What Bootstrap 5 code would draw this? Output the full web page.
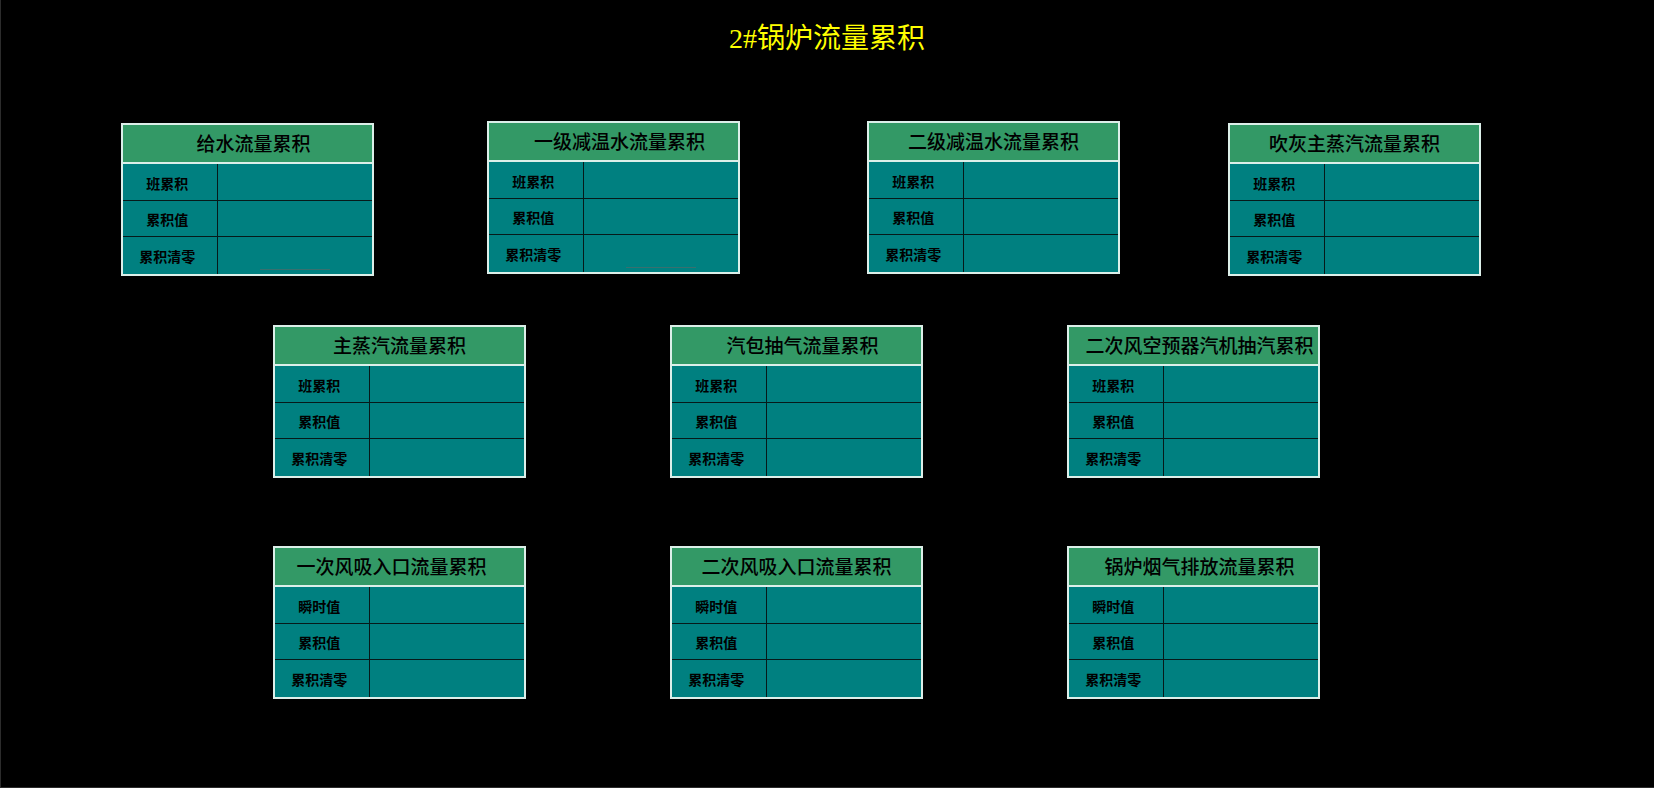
<!DOCTYPE html>
<html lang="zh-CN">
<head>
<meta charset="utf-8">
<meta name="viewport" content="width=device-width, initial-scale=1">
<title>2#锅炉流量累积</title>
<link href="https://cdn.jsdelivr.net/npm/bootstrap@5.3.0/dist/css/bootstrap.min.css" rel="stylesheet">
<style>
  body {
    background: #000;
    color: #000;
    font-family: "Noto Sans CJK SC", sans-serif;
    box-shadow: inset 1px -1px 0 #2c2c2c;
  }
  .page-title {
    color: #ff0;
    font-family: "Liberation Serif", "Noto Sans CJK SC", serif;
    font-size: 28px;
    line-height: 36px;
    padding-top: 21px;
    margin-bottom: 64px;
  }
  /* Meter rows: flexible tracks, panels sit on the even ones */
  .meters { display: grid; align-items: start; }
  .meters-four { grid-template-columns: 121fr 253fr 113fr 253fr 127fr 253fr 108fr 253fr 173fr; margin-bottom: 49px; }
  .meters-three { grid-template-columns: 273fr 253fr 144fr 253fr 144fr 253fr 334fr; margin-bottom: 68px; }
  .meters > :nth-child(1) { grid-column: 2; }
  .meters > :nth-child(2) { grid-column: 4; }
  .meters > :nth-child(3) { grid-column: 6; }
  .meters > :nth-child(4) { grid-column: 8; }
  .meters-four > :nth-child(3n+1) { margin-top: 2px; }

  .meter {
    width: 100%;
    table-layout: fixed;
    border-collapse: separate;
    border-spacing: 0;
    border: 2px solid #dcefe9;
    background: #008080;
    text-align: center;
    white-space: nowrap;
  }
  .meter th, .meter td { padding: 0; }
  .meter col:first-child { width: 38%; }
  .meter thead th {
    height: 39px;
    background: #396;
    border-bottom: 2px solid #dcefe9;
    font-size: 19px;
    font-weight: 500;
    line-height: 28px;
    padding-bottom: 2px;
  }
  .meter thead .lean-end { padding-left: 12px; }
  .meter thead .lean-start { padding-right: 16px; }
  .meter tbody th, .meter tbody td { height: 36px; border-bottom: 1px solid #061a1a; }
  .meter tbody tr:last-child > * { border-bottom: 0; }
  .meter tbody th {
    border-right: 1px solid #061a1a;
    font-size: 14px;
    font-weight: 700;
    line-height: 20px;
    padding-right: 5px;
  }
  .meter tbody tr:first-child > *, .meter tbody tr:last-child > * { height: 37px; }
  .meter tbody tr:first-child th { padding-top: 2px; }
  .meter td.reading { vertical-align: bottom; padding-bottom: 4px; }
  .underscore { width: 45%; border-bottom: 1px solid #38706f; }
</style>
</head>
<body class="min-vh-100">
<h1 class="page-title text-center fw-normal">2#锅炉流量累积</h1>

<main>
  <section class="meters meters-four">
    <table class="meter">
      <colgroup><col><col></colgroup>
      <thead><tr><th colspan="2" class="lean-end">给水流量累积</th></tr></thead>
      <tbody>
        <tr><th scope="row">班累积</th><td></td></tr>
        <tr><th scope="row">累积值</th><td></td></tr>
        <tr><th scope="row">累积清零</th><td class="reading"><div class="underscore mx-auto"></div></td></tr>
      </tbody>
    </table>
    <table class="meter">
      <colgroup><col><col></colgroup>
      <thead><tr><th colspan="2" class="lean-end">一级减温水流量累积</th></tr></thead>
      <tbody>
        <tr><th scope="row">班累积</th><td></td></tr>
        <tr><th scope="row">累积值</th><td></td></tr>
        <tr><th scope="row">累积清零</th><td class="reading"><div class="underscore mx-auto"></div></td></tr>
      </tbody>
    </table>
    <table class="meter">
      <colgroup><col><col></colgroup>
      <thead><tr><th colspan="2">二级减温水流量累积</th></tr></thead>
      <tbody>
        <tr><th scope="row">班累积</th><td></td></tr>
        <tr><th scope="row">累积值</th><td></td></tr>
        <tr><th scope="row">累积清零</th><td></td></tr>
      </tbody>
    </table>
    <table class="meter">
      <colgroup><col><col></colgroup>
      <thead><tr><th colspan="2">吹灰主蒸汽流量累积</th></tr></thead>
      <tbody>
        <tr><th scope="row">班累积</th><td></td></tr>
        <tr><th scope="row">累积值</th><td></td></tr>
        <tr><th scope="row">累积清零</th><td></td></tr>
      </tbody>
    </table>
  </section>

  <section class="meters meters-three">
    <table class="meter">
      <colgroup><col><col></colgroup>
      <thead><tr><th colspan="2">主蒸汽流量累积</th></tr></thead>
      <tbody>
        <tr><th scope="row">班累积</th><td></td></tr>
        <tr><th scope="row">累积值</th><td></td></tr>
        <tr><th scope="row">累积清零</th><td></td></tr>
      </tbody>
    </table>
    <table class="meter">
      <colgroup><col><col></colgroup>
      <thead><tr><th colspan="2" class="lean-end">汽包抽气流量累积</th></tr></thead>
      <tbody>
        <tr><th scope="row">班累积</th><td></td></tr>
        <tr><th scope="row">累积值</th><td></td></tr>
        <tr><th scope="row">累积清零</th><td></td></tr>
      </tbody>
    </table>
    <table class="meter">
      <colgroup><col><col></colgroup>
      <thead><tr><th colspan="2" class="lean-end">二次风空预器汽机抽汽累积</th></tr></thead>
      <tbody>
        <tr><th scope="row">班累积</th><td></td></tr>
        <tr><th scope="row">累积值</th><td></td></tr>
        <tr><th scope="row">累积清零</th><td></td></tr>
      </tbody>
    </table>
  </section>

  <section class="meters meters-three">
    <table class="meter">
      <colgroup><col><col></colgroup>
      <thead><tr><th colspan="2" class="lean-start">一次风吸入口流量累积</th></tr></thead>
      <tbody>
        <tr><th scope="row">瞬时值</th><td></td></tr>
        <tr><th scope="row">累积值</th><td></td></tr>
        <tr><th scope="row">累积清零</th><td></td></tr>
      </tbody>
    </table>
    <table class="meter">
      <colgroup><col><col></colgroup>
      <thead><tr><th colspan="2">二次风吸入口流量累积</th></tr></thead>
      <tbody>
        <tr><th scope="row">瞬时值</th><td></td></tr>
        <tr><th scope="row">累积值</th><td></td></tr>
        <tr><th scope="row">累积清零</th><td></td></tr>
      </tbody>
    </table>
    <table class="meter">
      <colgroup><col><col></colgroup>
      <thead><tr><th colspan="2" class="lean-end">锅炉烟气排放流量累积</th></tr></thead>
      <tbody>
        <tr><th scope="row">瞬时值</th><td></td></tr>
        <tr><th scope="row">累积值</th><td></td></tr>
        <tr><th scope="row">累积清零</th><td></td></tr>
      </tbody>
    </table>
  </section>
</main>
<script src="https://cdn.jsdelivr.net/npm/bootstrap@5.3.0/dist/js/bootstrap.bundle.min.js"></script>
</body>
</html>
